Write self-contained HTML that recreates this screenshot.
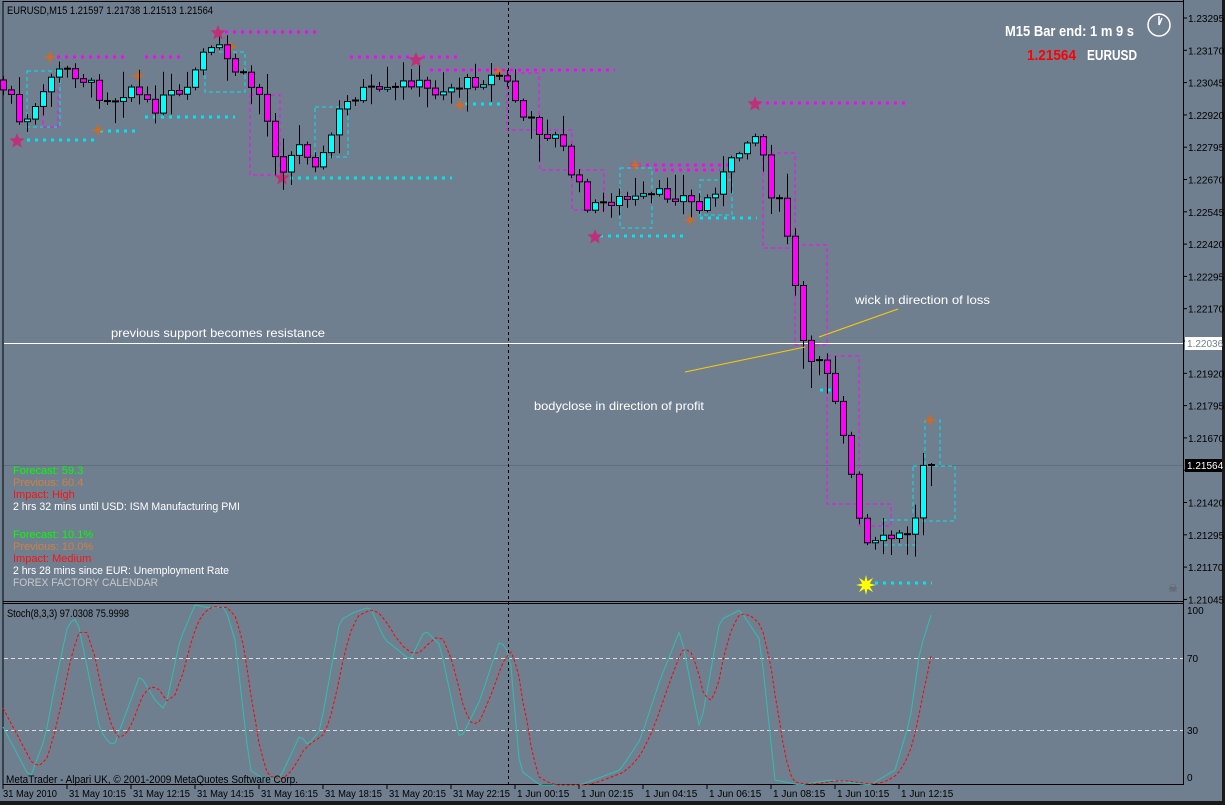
<!DOCTYPE html>
<html><head><meta charset="utf-8"><style>
html,body{margin:0;padding:0;background:#000;}
body{width:1225px;height:805px;overflow:hidden;}
svg{display:block;font-family:"Liberation Sans",sans-serif;}
</style></head><body>
<svg id="s" width="1225" height="805" xmlns="http://www.w3.org/2000/svg">
<rect x="0" y="0" width="1225" height="805" fill="#707f8f"/>
<rect x="1222" y="0" width="3" height="805" fill="#1a1a1a"/>
<rect x="0" y="801" width="1225" height="4" fill="#1a1a1a"/>
<line x1="3" y1="1" x2="3" y2="785" stroke="#000"/>
<line x1="1183.5" y1="0" x2="1183.5" y2="785" stroke="#000"/>
<line x1="3" y1="601.5" x2="1183" y2="601.5" stroke="#000"/>
<line x1="3" y1="603.5" x2="1183" y2="603.5" stroke="#000"/>
<line x1="3" y1="784.5" x2="1183" y2="784.5" stroke="#000"/>
<line x1="3" y1="1.5" x2="1183" y2="1.5" stroke="#000"/>
<line x1="4" y1="465.5" x2="1183" y2="465.5" stroke="#5f6e7e"/>
<line x1="4" y1="343.5" x2="1183" y2="343.5" stroke="#fff"/>
<line x1="4" y1="658.5" x2="1183" y2="658.5" stroke="#ddd" stroke-dasharray="4 3"/>
<line x1="4" y1="730.5" x2="1183" y2="730.5" stroke="#ddd" stroke-dasharray="4 3"/>
<line x1="508.5" y1="2" x2="508.5" y2="785" stroke="#000" stroke-dasharray="3 3"/>
<g id="ov"></g>
<g id="cd"></g>
<g id="st"></g>
<line x1="685" y1="372" x2="805" y2="347" stroke="#ffcc00"/>
<line x1="819" y1="337" x2="898" y2="309" stroke="#ffcc00"/>
<g font-size="12" fill="#fff">
<text x="111" y="337" textLength="214" lengthAdjust="spacingAndGlyphs">previous support becomes resistance</text>
<text x="855" y="304" textLength="135" lengthAdjust="spacingAndGlyphs">wick in direction of loss</text>
<text x="534" y="410" textLength="170" lengthAdjust="spacingAndGlyphs">bodyclose in direction of profit</text>
</g>
<text x="7" y="14" font-size="11" fill="#000" textLength="206" lengthAdjust="spacingAndGlyphs">EURUSD,M15  1.21597 1.21738 1.21513 1.21564</text>
<text x="7" y="617" font-size="11" fill="#000" textLength="122" lengthAdjust="spacingAndGlyphs">Stoch(8,3,3) 97.0308 75.9998</text>
<text x="6" y="783" font-size="11" fill="#000" textLength="292" lengthAdjust="spacingAndGlyphs">MetaTrader - Alpari UK, © 2001-2009 MetaQuotes Software Corp.</text>
<g font-size="11">
<text x="13" y="474" fill="#00ff00">Forecast: 59.3</text>
<text x="13" y="486" fill="#d08040">Previous: 60.4</text>
<text x="13" y="498" fill="#ff1010">Impact: High</text>
<text x="13" y="510" fill="#fff" textLength="227" lengthAdjust="spacingAndGlyphs">2 hrs 32 mins until USD: ISM Manufacturing PMI</text>
<text x="13" y="538" fill="#00ff00">Forecast: 10.1%</text>
<text x="13" y="550" fill="#d08040">Previous: 10.0%</text>
<text x="13" y="562" fill="#ff1010">Impact: Medium</text>
<text x="13" y="574" fill="#fff" textLength="216" lengthAdjust="spacingAndGlyphs">2 hrs 28 mins since EUR: Unemployment Rate</text>
<text x="13" y="586" fill="#c8c8c8" textLength="145" lengthAdjust="spacingAndGlyphs">FOREX FACTORY CALENDAR</text>
</g>
<text x="1005" y="36" font-size="15" font-weight="bold" fill="#fff" textLength="129" lengthAdjust="spacingAndGlyphs">M15 Bar end: 1 m 9 s</text>
<text x="1027" y="60" font-size="15" font-weight="bold" fill="#ff0000" textLength="49" lengthAdjust="spacingAndGlyphs">1.21564</text>
<text x="1087" y="60" font-size="15" font-weight="bold" fill="#fff" textLength="50" lengthAdjust="spacingAndGlyphs">EURUSD</text>
<circle cx="1159" cy="25" r="11" fill="none" stroke="#fff" stroke-width="1.5"/>
<line x1="1159" y1="25" x2="1159" y2="16" stroke="#fff" stroke-width="1.5"/>
<line x1="1159" y1="25" x2="1162" y2="18" stroke="#fff" stroke-width="1.5"/>
<g id="ax" font-size="10" fill="#000"></g>
<rect x="1185" y="337" width="37" height="13" fill="#fff"/>
<text x="1187" y="347" font-size="10" fill="#708090">1.22036</text>
<rect x="1185" y="459" width="37" height="13" fill="#000"/>
<text x="1187" y="469" font-size="10" fill="#fff">1.21564</text>
<text x="1168" y="592" font-size="11" fill="#555">☠</text>
</svg>
<script>
var NS="http://www.w3.org/2000/svg";
function el(p,t,a,txt){var e=document.createElementNS(NS,t);for(var k in a)e.setAttribute(k,a[k]);if(txt!=null)e.textContent=txt;p.appendChild(e);return e;}
function interp(pts,x){for(var i=0;i<pts.length-1;i++){if(x<=pts[i+1][0]){var a=pts[i],b=pts[i+1];return a[1]+(b[1]-a[1])*(x-a[0])/(b[0]-a[0]);}}return pts[pts.length-1][1];}
var ax=document.getElementById('ax');
var labs=["1.23295","1.23170","1.23045","1.22920","1.22795","1.22670","1.22545","1.22420","1.22295","1.22170","","1.21920","1.21795","1.21670","","1.21420","1.21295","1.21170","1.21045"];
for(var i=0;i<labs.length;i++){var y=18+i*32.3;el(ax,'line',{x1:1183,x2:1187,y1:y,y2:y,stroke:'#000'});if(labs[i])el(ax,'text',{x:1188,y:y+4},labs[i]);}
[["100",610],["70",658],["30",730],["0",777]].forEach(function(s){el(ax,'text',{x:1187,y:s[1]+4},s[0]);});
var tl=["31 May 2010","31 May 10:15","31 May 12:15","31 May 14:15","31 May 16:15","31 May 18:15","31 May 20:15","31 May 22:15","1 Jun 00:15","1 Jun 02:15","1 Jun 04:15","1 Jun 06:15","1 Jun 08:15","1 Jun 10:15","1 Jun 12:15"];
tl.forEach(function(t,i){var x=3+64*i;el(ax,'line',{x1:x,x2:x,y1:785,y2:789,stroke:'#000'});var e=el(ax,'text',{x:x+(i==0?0:2),y:797},t);if(i<8){e.setAttribute('textLength',i==0?54:57);e.setAttribute('lengthAdjust','spacingAndGlyphs');}});
var ov=document.getElementById('ov');
function dl(x1,x2,y,c){el(ov,'line',{x1:x1,x2:x2,y1:y,y2:y,stroke:c,'stroke-width':3,'stroke-dasharray':'3 5'});}
[[225,318,32],[57,125,57],[145,180,57],[350,460,57],[430,615,70],[750,910,103],[630,730,165],[655,720,170]].forEach(function(a){dl(a[0],a[1],a[2],'#ff00ff');});
[[27,95,140],[100,140,131],[145,235,117],[290,452,178],[465,500,104],[600,685,236],[700,757,218],[875,932,583],[820,840,390]].forEach(function(a){dl(a[0],a[1],a[2],'#00e5ee');});
function box(x,y,w,h,c){el(ov,'rect',{x:x,y:y,width:w,height:h,fill:'none',stroke:c,'stroke-dasharray':'4 3'});}
box(27,71,33,56,'#00e5ee');box(43,90,15,37,'#ff00ff');box(205,52,40,40,'#00e5ee');box(250,95,30,80,'#ff00ff');
box(315,107,33,50,'#00e5ee');box(507,73,32,57,'#ff00ff');box(540,130,32,40,'#ff00ff');box(572,170,32,40,'#ff00ff');
box(620,168,32,60,'#00e5ee');box(700,180,32,35,'#00e5ee');box(763,153,32,95,'#ff00ff');box(795,245,32,100,'#ff00ff');
box(827,356,32,148,'#ff00ff');box(859,504,32,22,'#ff00ff');box(883,520,32,25,'#00e5ee');box(913,466,42,55,'#00e5ee');box(925,420,15,46,'#00e5ee');
function star(cx,cy,r,c){var p=[];for(var i=0;i<10;i++){var a=-Math.PI/2+i*Math.PI/5,rr=i%2?r*0.45:r;p.push((cx+rr*Math.cos(a)).toFixed(1)+','+(cy+rr*Math.sin(a)).toFixed(1));}el(ov,'polygon',{points:p.join(' '),fill:c});}
function cross(cx,cy,c){var p=[];for(var i=0;i<8;i++){var a=-Math.PI/2+i*Math.PI/4,rr=i%2?2:7;p.push((cx+rr*Math.cos(a)).toFixed(1)+','+(cy+rr*Math.sin(a)).toFixed(1));}el(ov,'polygon',{points:p.join(' '),fill:c});}
[[17,141],[218,33],[416,60],[282,178],[595,237],[755,104]].forEach(function(a){star(a[0],a[1],8,'#c0307a');});
[[50,57],[98,130],[138,76],[231,47],[460,105],[498,72],[635,165],[690,220],[930,420]].forEach(function(a){cross(a[0],a[1],'#d2691e');});
(function(){var p=[];for(var i=0;i<16;i++){var a=i*Math.PI/8,rr=i%2?4:10;p.push((866+rr*Math.cos(a)).toFixed(1)+','+(585+rr*Math.sin(a)).toFixed(1));}el(ov,'polygon',{points:p.join(' '),fill:'#ffff00'});})();
var cp=[[3,90],[10,90],[18,125],[30,122],[40,100],[50,75],[70,70],[85,80],[100,95],[115,98],[130,85],[150,110],[170,95],[185,100],[200,55],[220,50],[235,70],[245,80],[260,95],[272,140],[280,170],[300,145],[320,165],[340,110],[360,90],[380,95],[395,90],[410,80],[430,92],[460,85],[500,75],[512,90],[520,115],[540,130],[560,140],[570,170],[590,210],[610,200],[640,200],[660,195],[680,195],[700,210],[720,180],[740,150],[750,130],[760,140],[770,190],[782,210],[790,250],[800,330],[810,370],[820,355],[830,375],[845,440],[855,500],[862,540],[870,548],[885,540],[905,535],[915,520],[922,462],[931,465]];
var cd=document.getElementById('cd');var seed=7;function rnd(){seed=(seed*9301+49297)%233280;return seed/233280;}
var prev=80;
for(var i=0;i<117;i++){var x=3+8*i;var c=interp(cp,x)+(rnd()-0.5)*14;if(i==116)c=465;var o=prev;
var wt=Math.min(o,c)-2-rnd()*rnd()*30,wb=Math.max(o,c)+2+rnd()*rnd()*30;
el(cd,'line',{x1:x+0.5,x2:x+0.5,y1:wt.toFixed(1),y2:wb.toFixed(1),stroke:'#000'});
if(Math.abs(o-c)<1.5){el(cd,'line',{x1:x-3,x2:x+4,y1:c.toFixed(1),y2:c.toFixed(1),stroke:'#000','stroke-width':2});}
else{el(cd,'rect',{x:x-2.5,y:Math.min(o,c).toFixed(1),width:6,height:Math.abs(o-c).toFixed(1),fill:c<o?'#00ffff':'#ff00ff',stroke:'#000'});}
prev=c;}
var tp=[[3,727],[30,778],[45,738],[55,685],[68,624],[77,618],[100,730],[110,744],[115,743],[140,675],[155,700],[165,710],[180,640],[195,605],[210,608],[225,607],[235,640],[250,770],[265,780],[280,778],[300,735],[308,745],[320,730],[340,620],[355,612],[370,607],[385,640],[392,645],[410,660],[425,630],[440,645],[460,740],[480,700],[500,640],[510,655],[520,770],[540,785],[580,785],[620,770],[640,740],[660,680],[680,630],[700,730],[720,620],[740,610],[760,640],[775,780],[800,785],[830,780],[870,785],[895,770],[910,720],[920,650],[932,612]];
var st=document.getElementById('st');var pt=[],pr=[];
for(var x=3;x<=932;x+=4){pt.push(x+','+interp(tp,x).toFixed(1));var r=(interp(tp,x-2)+interp(tp,x-10)+interp(tp,x-18))/3;pr.push(x+','+r.toFixed(1));}
el(st,'polyline',{points:pt.join(' '),fill:'none',stroke:'#2fbfb0','stroke-width':1});
el(st,'polyline',{points:pr.join(' '),fill:'none',stroke:'#ff0000','stroke-width':1,'stroke-dasharray':'3 2'});
</script>
</body></html>
